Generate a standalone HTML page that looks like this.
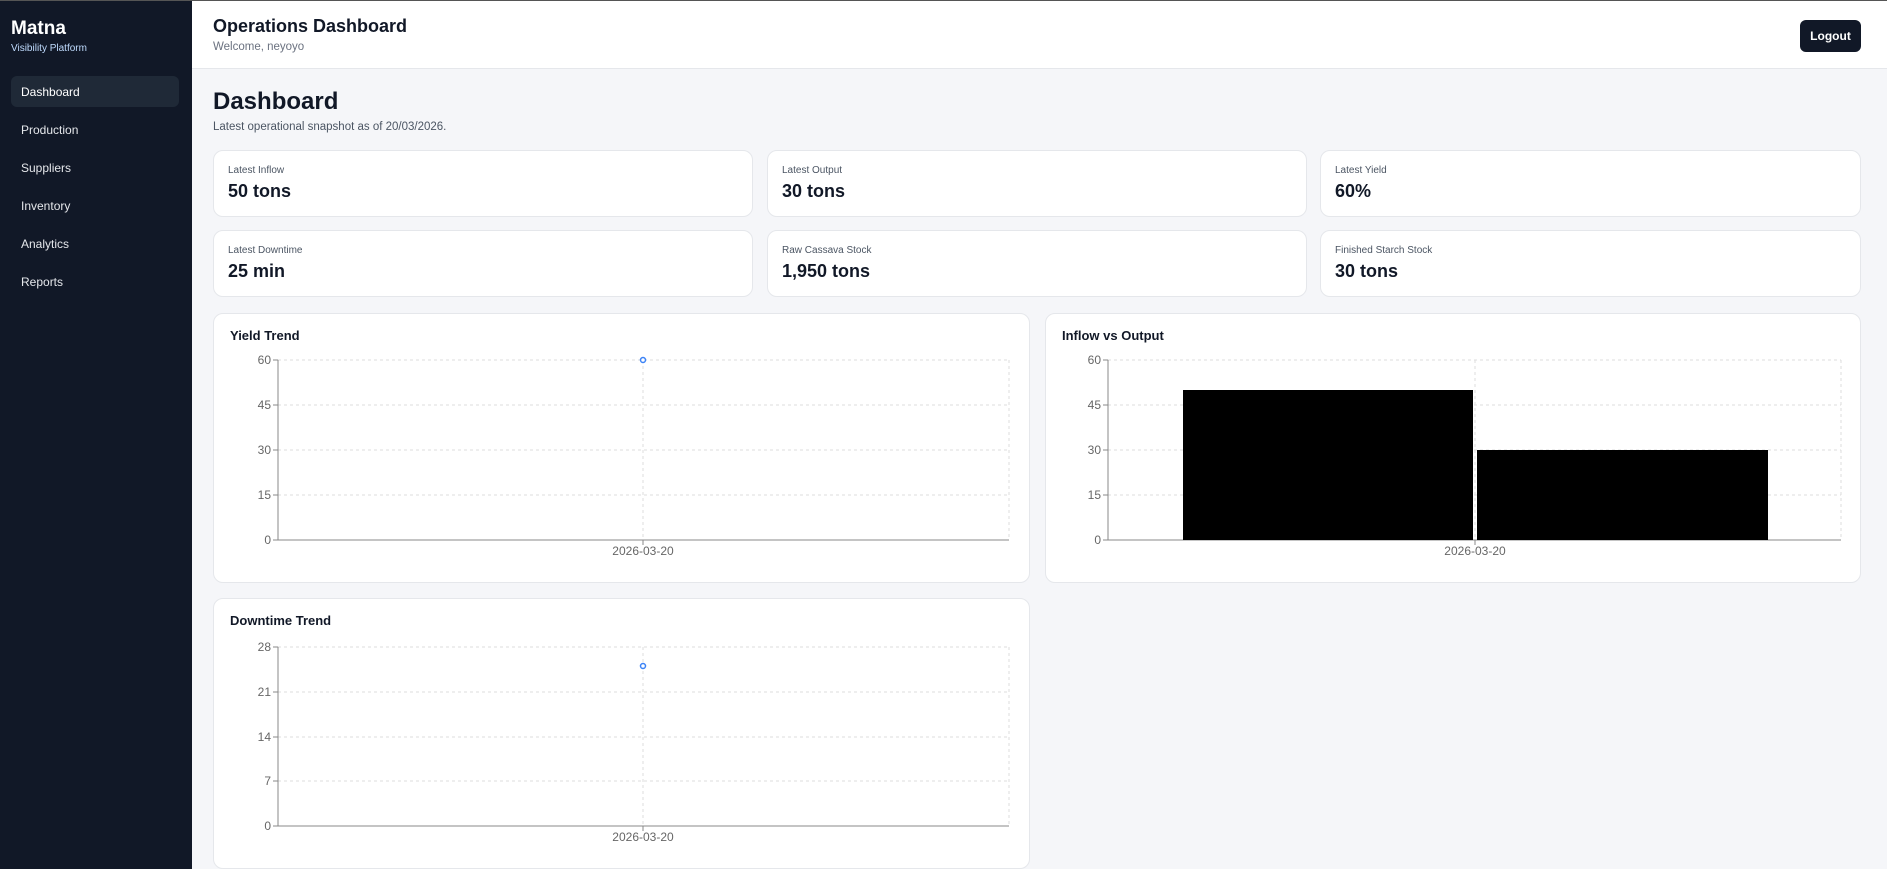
<!DOCTYPE html>
<html><head><meta charset="utf-8"><style>
*{box-sizing:border-box;margin:0;padding:0}
body{width:1887px;height:869px;overflow:hidden;font-family:"Liberation Sans",Arial,sans-serif;background:#f5f6f9;position:relative;color:#111827}
.sb{position:absolute;left:0;top:0;width:192px;height:869px;background:#111827;border-top:1px solid #555}
.logo{position:absolute;left:11px;top:17px;color:#fff;font-size:19px;font-weight:bold}
.sub{position:absolute;left:11px;top:42px;color:#bfdbfe;font-size:10px}
.nav{position:absolute;left:11px;width:168px;height:31px;color:#e5e7eb;font-size:12px;padding:9px 0 0 10px;border-radius:6px}
.nav.a{background:#1f2937;color:#fff}
.hdr{position:absolute;left:192px;top:0;right:0;height:69px;background:#fff;border-bottom:1px solid #e5e7eb;border-top:1px solid #555}
.hdr h1{position:absolute;left:21px;top:15px;font-size:18px}
.hdr p{position:absolute;left:21px;top:40px;font-size:11.5px;color:#6b7280}
.btn{position:absolute;right:26px;top:19px;width:61px;height:32px;background:#111827;color:#fff;border-radius:6px;font-size:12px;font-weight:bold;text-align:center;line-height:32px}
.card{position:absolute;background:#fff;border:1px solid #e5e7eb;border-radius:10px}
.lab{position:absolute;left:14px;top:14px;font-size:10px;color:#4b5563}
.val{position:absolute;left:14px;top:30px;font-size:18px;font-weight:bold}
.ct{position:absolute;left:16px;top:14px;font-size:13px;font-weight:bold}
svg{position:absolute;left:0;top:0}
svg text{font-family:"Liberation Sans",Arial,sans-serif;font-size:12px;fill:#666}
</style></head><body>
<div class="sb">
<div class="logo">Matna</div><div class="sub">Visibility Platform</div>
<div class="nav a" style="top:75px">Dashboard</div>
<div class="nav" style="top:113px">Production</div>
<div class="nav" style="top:151px">Suppliers</div>
<div class="nav" style="top:189px">Inventory</div>
<div class="nav" style="top:227px">Analytics</div>
<div class="nav" style="top:265px">Reports</div>
</div>
<div class="hdr"><h1>Operations Dashboard</h1><p>Welcome, neyoyo</p><div class="btn">Logout</div></div>
<div style="position:absolute;left:213px;top:88px;font-size:24px;font-weight:bold">Dashboard</div>
<div style="position:absolute;left:213px;top:121px;font-size:11.5px;color:#4b5563">Latest operational snapshot as of 20/03/2026.</div>

<div class="card" style="left:213px;top:150px;width:540px;height:67px"><div class="lab">Latest Inflow</div><div class="val">50 tons</div></div>
<div class="card" style="left:767px;top:150px;width:540px;height:67px"><div class="lab">Latest Output</div><div class="val">30 tons</div></div>
<div class="card" style="left:1320px;top:150px;width:541px;height:67px"><div class="lab">Latest Yield</div><div class="val">60%</div></div>
<div class="card" style="left:213px;top:230px;width:540px;height:67px"><div class="lab">Latest Downtime</div><div class="val">25 min</div></div>
<div class="card" style="left:767px;top:230px;width:540px;height:67px"><div class="lab">Raw Cassava Stock</div><div class="val">1,950 tons</div></div>
<div class="card" style="left:1320px;top:230px;width:541px;height:67px"><div class="lab">Finished Starch Stock</div><div class="val">30 tons</div></div>

<div class="card" style="left:213px;top:313px;width:817px;height:270px"><div class="ct">Yield Trend</div></div>
<div class="card" style="left:1045px;top:313px;width:816px;height:270px"><div class="ct">Inflow vs Output</div></div>
<div class="card" style="left:213px;top:598px;width:817px;height:271px"><div class="ct">Downtime Trend</div></div>

<svg width="1887" height="869">
<g stroke="#ddd" stroke-dasharray="3 3" fill="none">
<path d="M278 360H1009M278 405H1009M278 450H1009M278 495H1009M643 360V540M1009 360V540"/>
<path d="M1108 360H1841M1108 405H1841M1108 450H1841M1108 495H1841M1475 360V540M1841 360V540"/>
<path d="M278 647H1009M278 692H1009M278 737H1009M278 781H1009M643 647V826M1009 647V826"/>
</g>
<g stroke="#888" fill="none">
<path d="M278 360V540H1009M273 360H278M273 405H278M273 450H278M273 495H278M273 540H278M643 540V545"/>
<path d="M1108 360V540H1841M1103 360H1108M1103 405H1108M1103 450H1108M1103 495H1108M1103 540H1108M1475 540V545"/>
<path d="M278 647V826H1009M273 647H278M273 692H278M273 737H278M273 781H278M273 826H278M643 826V831"/>
</g>
<rect x="1183" y="390" width="290" height="150" fill="#000"/>
<rect x="1477" y="450" width="291" height="90" fill="#000"/>
<circle cx="643" cy="360" r="2.5" fill="#fff" stroke="#3b82f6" stroke-width="1.5"/>
<circle cx="643" cy="666" r="2.5" fill="#fff" stroke="#3b82f6" stroke-width="1.5"/>
<g text-anchor="end">
<text x="271" y="364">60</text><text x="271" y="409">45</text><text x="271" y="454">30</text><text x="271" y="499">15</text><text x="271" y="544">0</text>
<text x="1101" y="364">60</text><text x="1101" y="409">45</text><text x="1101" y="454">30</text><text x="1101" y="499">15</text><text x="1101" y="544">0</text>
<text x="271" y="651">28</text><text x="271" y="696">21</text><text x="271" y="741">14</text><text x="271" y="785">7</text><text x="271" y="830">0</text>
</g>
<g text-anchor="middle">
<text x="643" y="555">2026-03-20</text><text x="1475" y="555">2026-03-20</text><text x="643" y="841">2026-03-20</text>
</g>
</svg>
</body></html>
